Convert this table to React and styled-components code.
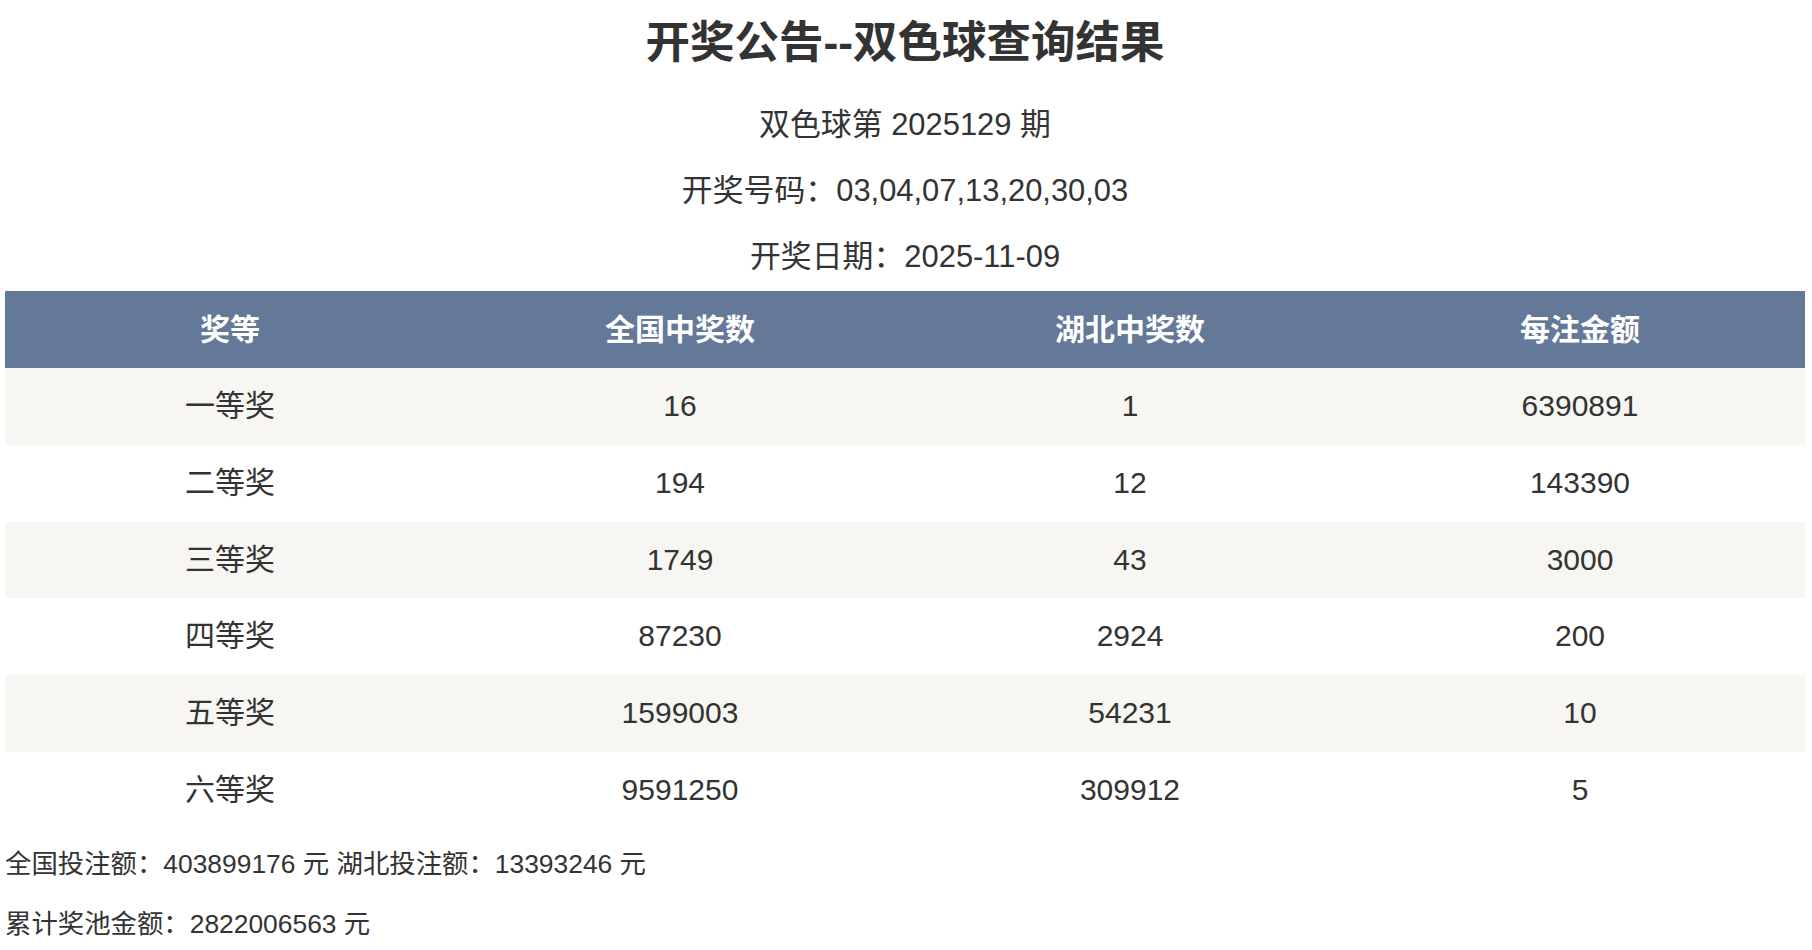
import React from "react"
import styled, { createGlobalStyle } from "styled-components"

const GlobalStyle = createGlobalStyle`
  body {
    margin: 0;
    background: #fff;
    color: #333;
    font-family: "Liberation Sans", "Noto Sans CJK SC", sans-serif;
  }
`

const rows = [
  ["一等奖", "16", "1", "6390891"],
  ["二等奖", "194", "12", "143390"],
  ["三等奖", "1749", "43", "3000"],
  ["四等奖", "87230", "2924", "200"],
  ["五等奖", "1599003", "54231", "10"],
  ["六等奖", "9591250", "309912", "5"],
]

const App = () => {
  return (
    <Page>
      <GlobalStyle />
      <Title>开奖公告--双色球查询结果</Title>
      <Info>双色球第 2025129 期</Info>
      <Info>开奖号码：03,04,07,13,20,30,03</Info>
      <Info>开奖日期：2025-11-09</Info>
      <ResultTable>
        <thead>
          <tr>
            <HeadCell>奖等</HeadCell>
            <HeadCell>全国中奖数</HeadCell>
            <HeadCell>湖北中奖数</HeadCell>
            <HeadCell>每注金额</HeadCell>
          </tr>
        </thead>
        <tbody>
          {rows.map((r) => (
            <Row key={r[0]}>
              {r.map((c, i) => (
                <Cell key={i}>{c}</Cell>
              ))}
            </Row>
          ))}
        </tbody>
      </ResultTable>
      <Footer>
        <FootLine>全国投注额：403899176 元 湖北投注额：13393246 元</FootLine>
        <FootLine>累计奖池金额：2822006563 元</FootLine>
      </Footer>
    </Page>
  )
}

export default App

const Page = styled.div`
  padding: 0 7px 0 5px;
`

const Title = styled.h1`
  margin: 14px 0 0;
  font-size: 44.5px;
  line-height: 58px;
  font-weight: bold;
  text-align: center;
`

const Info = styled.p`
  margin: 30px 0 0;
  font-size: 30.9px;
  line-height: 36px;
  text-align: center;

  &:first-of-type {
    margin-top: 35px;
  }
`

const ResultTable = styled.table`
  width: 100%;
  margin-top: 16px;
  border-collapse: collapse;
  table-layout: fixed;
`

const HeadCell = styled.th`
  background: #647898;
  color: #fff;
  font-size: 30px;
  font-weight: bold;
  line-height: 37px;
  padding: 20px 0;
  text-align: center;
`

const Row = styled.tr`
  &:nth-child(odd) {
    background: #f7f6f2;
  }
`

const Cell = styled.td`
  font-size: 30px;
  line-height: 36.8px;
  padding: 20px 0;
  text-align: center;
`

const Footer = styled.div`
  margin-top: 20px;
`

const FootLine = styled.p`
  margin: 0 0 30px;
  font-size: 26.4px;
  line-height: 30px;
`
